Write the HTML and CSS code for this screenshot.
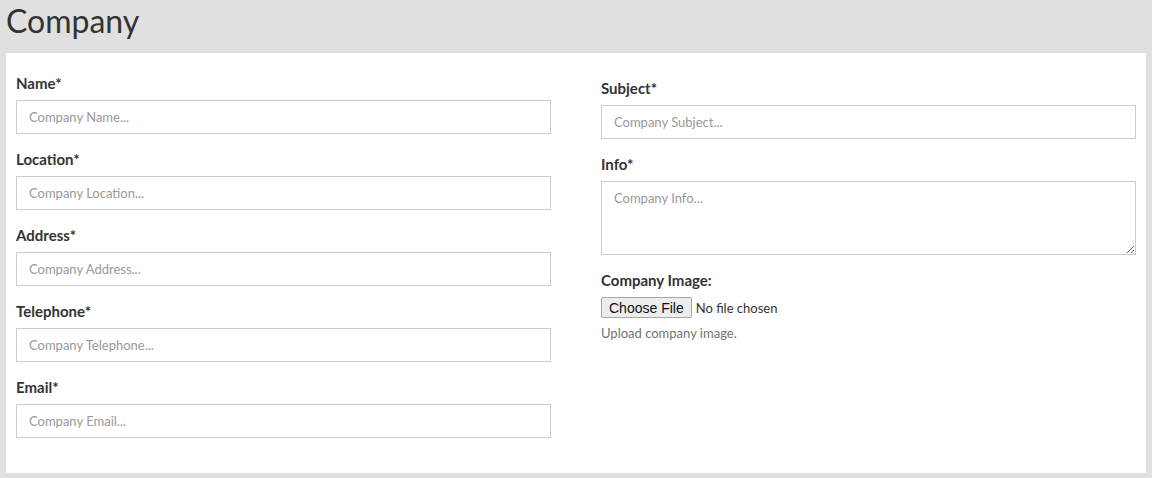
FILE: index.html
```html
<!DOCTYPE html>
<html>
<head>
<meta charset="utf-8">
<link rel="stylesheet" href="styles.css">
</head>
<body>
<header class="page-header"><h1 class="title">Company</h1></header>
<main class="card">
  <div class="col">
    <div class="group"><label class="lbl">Name<span class="req">*</span></label><input class="field" placeholder="Company Name..."></div>
    <div class="group"><label class="lbl">Location<span class="req">*</span></label><input class="field" placeholder="Company Location..."></div>
    <div class="group"><label class="lbl">Address<span class="req">*</span></label><input class="field" placeholder="Company Address..."></div>
    <div class="group"><label class="lbl">Telephone<span class="req">*</span></label><input class="field" placeholder="Company Telephone..."></div>
    <div class="group"><label class="lbl">Email<span class="req">*</span></label><input class="field" placeholder="Company Email..."></div>
  </div>
  <div class="col col-right">
    <div class="group"><label class="lbl">Subject<span class="req">*</span></label><input class="field" placeholder="Company Subject..."></div>
    <div class="group"><label class="lbl">Info<span class="req">*</span></label><textarea class="field area" placeholder="Company Info..."></textarea></div>
    <div class="group"><label class="lbl">Company Image:</label><input class="file" type="file"><p class="help">Upload company image.</p></div>
  </div>
</main>
</body>
</html>
```
FILE: styles.css
```css
html, body { margin: 0; padding: 0; }
body { background: #e0e0e0; font-family: Lato, "Open Sans", sans-serif; color: #333; }
.page-header { height: 53px; padding: 0 6px; box-sizing: border-box; }
.title { margin: 0; padding-top: 3px; font-size: 32px; font-weight: 400; line-height: 36px; color: #333; }
.card { background: #fff; margin: 0 6px 5px; padding: 20px 10px 20px; display: grid; grid-template-columns: 1fr 1fr; column-gap: 50px; height: 420px; box-sizing: border-box; }
.col-right { padding-top: 5px; }
.group { display: flex; flex-direction: column; margin-bottom: 15px; }
.lbl { font-weight: 700; font-size: 15px; line-height: 20px; margin-bottom: 7px; color: #333; }
.req { color: #333; }
.field { height: 34px; box-sizing: border-box; border: 1px solid #ccc; border-radius: 0; padding: 0 12px; font-family: Lato, "Open Sans", sans-serif; font-size: 13px; color: #555; background: #fff; outline: none; margin: 0; }
.field::placeholder { color: #999; }
.area { height: 74px; padding-top: 8px; resize: vertical; display: block; }
.file { font-family: Lato, "Open Sans", sans-serif; font-size: 13px; color: #333; height: 21px; margin: 0; }
.file::file-selector-button { font-family: "Liberation Sans", Arial, sans-serif; font-size: 14px; height: 21px; padding: 0 7px; margin-right: 4px; background: #ededed; border: 1px solid #a6a6a6; border-radius: 2px; color: #111; }
.help { margin: 6px 0 0; font-size: 13px; line-height: 18px; color: #737373; }
```
